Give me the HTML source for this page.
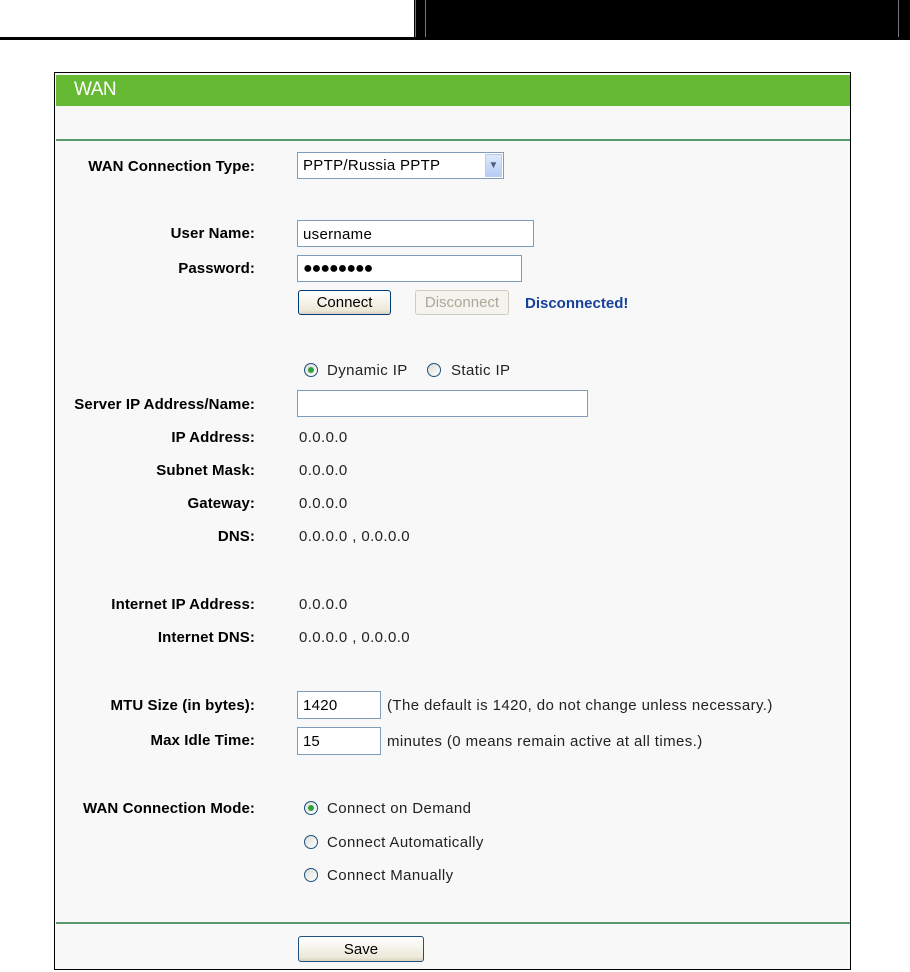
<!DOCTYPE html>
<html><head><meta charset="utf-8"><style>
*{margin:0;padding:0;box-sizing:border-box}
body{width:910px;height:972px;background:#fff;position:relative;overflow:hidden;font-family:"Liberation Sans",Arial,sans-serif}
.a{position:absolute;white-space:nowrap}
.l{position:absolute;right:655px;font-weight:bold;font-size:15px;color:#000;letter-spacing:0.1px;white-space:nowrap;margin-top:1px}
.v{position:absolute;left:299px;font-size:15px;color:#222;white-space:nowrap;letter-spacing:0.4px;margin-top:2px}
.in{position:absolute;background:#fff;border:1px solid #7f9db9;font-size:15px;padding-left:5px;line-height:27px;color:#000}
.btn{position:absolute;border:1px solid #003c74;border-radius:3px;background:linear-gradient(#fff,#ece9d8 85%,#d6d0c0);font-size:15px;text-align:center;color:#000}
.r{position:absolute;width:14px;height:14px;border-radius:50%;border:1px solid #1c5180;background:linear-gradient(135deg,#dcdcd4,#fff)}
.r.on::after{content:"";position:absolute;left:3px;top:3px;width:6px;height:6px;border-radius:50%;background:#2fa33a}
.t{position:absolute;font-size:15px;color:#222;white-space:nowrap;letter-spacing:0.4px;margin-top:2px}
</style></head><body>
<div class="a" style="left:0;top:37px;width:415px;height:3px;background:#000"></div>
<div class="a" style="left:414px;top:0;width:496px;height:40px;background:#000"></div>
<div class="a" style="left:415px;top:0;width:1px;height:37px;background:#777"></div>
<div class="a" style="left:425px;top:0;width:1px;height:37px;background:#777"></div>
<div class="a" style="left:898px;top:0;width:1px;height:37px;background:#777"></div>

<div class="a" style="left:54px;top:72px;width:797px;height:898px;border:1px solid #000;background:#f8f8f8"></div>
<div class="a" style="left:56px;top:75px;width:794px;height:31px;background:#66b933"></div>
<div class="a" style="left:74px;top:79px;font-size:19px;color:#fff;letter-spacing:-0.5px">WAN</div>
<div class="a" style="left:56px;top:139px;width:794px;height:2px;background:#5a9a6e"></div>
<div class="a" style="left:56px;top:922px;width:794px;height:2px;background:#5a9a6e"></div>

<div class="l" style="top:157px">WAN Connection Type:</div>
<div class="in" style="left:297px;top:152px;width:207px;height:27px;line-height:26px;letter-spacing:0.3px">PPTP/Russia PPTP
<div style="position:absolute;right:1px;top:1px;width:17px;height:23px;background:linear-gradient(#dfe9fb,#b6cdf5);border:1px solid #b9cbee;color:#4d6185;font-size:10px;text-align:center;line-height:21px;letter-spacing:0">&#9660;</div></div>

<div class="l" style="top:224px">User Name:</div>
<div class="in" style="left:297px;top:220px;width:237px;height:27px;letter-spacing:0.3px">username</div>
<div class="l" style="top:259px">Password:</div>
<div class="in" style="left:297px;top:255px;width:225px;height:27px;font-size:16px;letter-spacing:-1px;line-height:25px">&#9679;&#9679;&#9679;&#9679;&#9679;&#9679;&#9679;&#9679;</div>
<div class="btn" style="left:298px;top:290px;width:93px;height:25px;line-height:24px">Connect</div>
<div class="btn" style="left:415px;top:290px;width:94px;height:25px;line-height:24px;border-color:#d0cdc0;color:#aca899;background:#f4f3ee">Disconnect</div>
<div class="a" style="left:525px;top:295px;font-size:15px;font-weight:bold;color:#16419c">Disconnected!</div>

<div class="r on" style="left:304px;top:363px"></div><div class="t" style="left:327px;top:360px">Dynamic IP</div>
<div class="r" style="left:427px;top:363px"></div><div class="t" style="left:451px;top:360px">Static IP</div>

<div class="l" style="top:395px">Server IP Address/Name:</div>
<div class="in" style="left:297px;top:390px;width:291px;height:27px"></div>
<div class="l" style="top:428px">IP Address:</div><div class="v" style="top:427px">0.0.0.0</div>
<div class="l" style="top:461px">Subnet Mask:</div><div class="v" style="top:460px">0.0.0.0</div>
<div class="l" style="top:494px">Gateway:</div><div class="v" style="top:493px">0.0.0.0</div>
<div class="l" style="top:527px">DNS:</div><div class="v" style="top:526px">0.0.0.0 , 0.0.0.0</div>
<div class="l" style="top:595px">Internet IP Address:</div><div class="v" style="top:594px">0.0.0.0</div>
<div class="l" style="top:628px">Internet DNS:</div><div class="v" style="top:627px">0.0.0.0 , 0.0.0.0</div>

<div class="l" style="top:696px">MTU Size (in bytes):</div>
<div class="in" style="left:297px;top:691px;width:84px;height:28px;letter-spacing:0.3px">1420</div>
<div class="t" style="left:387px;top:695px">(The default is 1420, do not change unless necessary.)</div>
<div class="l" style="top:731px">Max Idle Time:</div>
<div class="in" style="left:297px;top:727px;width:84px;height:28px">15</div>
<div class="t" style="left:387px;top:731px">minutes (0 means remain active at all times.)</div>

<div class="l" style="top:799px">WAN Connection Mode:</div>
<div class="r on" style="left:304px;top:801px"></div><div class="t" style="left:327px;top:798px">Connect on Demand</div>
<div class="r" style="left:304px;top:835px"></div><div class="t" style="left:327px;top:832px">Connect Automatically</div>
<div class="r" style="left:304px;top:868px"></div><div class="t" style="left:327px;top:865px">Connect Manually</div>

<div class="btn" style="left:298px;top:936px;width:126px;height:26px;line-height:25px;border-color:#1c5180">Save</div>
</body></html>
